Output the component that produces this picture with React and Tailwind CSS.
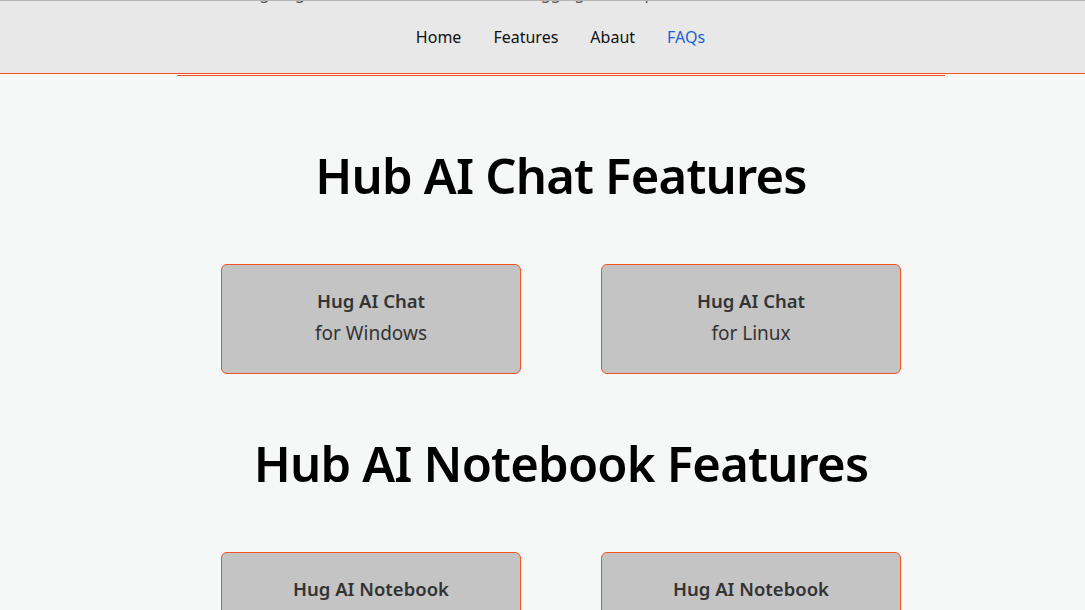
import React from "react";

const links = [
  { label: "Home" },
  { label: "Features" },
  { label: "Abaut" },
  { label: "FAQs", active: true },
];

const sections = [
  {
    title: "Hub AI Chat Features",
    cards: [
      { name: "Hug AI Chat", os: "for Windows" },
      { name: "Hug AI Chat", os: "for Linux" },
    ],
  },
  {
    title: "Hub AI Notebook Features",
    cards: [
      { name: "Hug AI Notebook", os: "for Windows" },
      { name: "Hug AI Notebook", os: "for Linux" },
    ],
  },
];

const FeatureCard = ({ name, os }) => (
  <div className="w-[300px] h-[110px] shrink-0 rounded-[6px] border border-[#f4511e] bg-[#c4c4c4] flex flex-col items-center justify-center pb-[4px] text-[#333333]">
    <span className="text-[18.5px] font-semibold leading-[33px]">{name}</span>
    <span className="text-[19px] leading-[33px]">{os}</span>
  </div>
);

export default function App() {
  return (
    <div
      className="h-[610px] overflow-hidden bg-[#f6f7f7] text-black"
      style={{ fontFamily: '"Noto Sans", "Open Sans", sans-serif' }}
    >
      {/* Header - page is scrolled a bit so the tagline is cut off */}
      <header className="h-[74px] overflow-hidden border-t border-b border-t-[#b4b4b4] border-b-[#f4511e] bg-[#e8e8e8]">
        <p className="-mt-[19px] pl-[226px] h-[22px] whitespace-nowrap text-[16px] leading-[22px] text-[#555]">
          Using Hug AI for chats, notes, code and logging and help
        </p>
        <nav className="pl-[36px] mt-[21px] flex justify-center gap-[32px] text-[16px] leading-[24px]">
          {links.map((l) => (
            <a
              key={l.label}
              href="#"
              className={l.active ? "text-[#1a62d6]" : "text-[#111111]"}
            >
              {l.label}
            </a>
          ))}
        </nav>
      </header>

      <div className="pl-[36px] flex justify-center mt-[1px]">
        <div className="w-[768px] h-[1px] bg-[#f4511e]" />
      </div>

      <main className="pl-[37px] pt-[69px]">
        {sections.map((s) => (
          <section key={s.title} className="flex flex-col items-center h-[288px]">
            <h2 className="text-[49px] font-semibold leading-[60px] tracking-[-0.8px]">
              {s.title}
            </h2>
            <div className="mt-[59px] flex gap-[80px]">
              {s.cards.map((c) => (
                <FeatureCard key={c.os} {...c} />
              ))}
            </div>
          </section>
        ))}
      </main>
    </div>
  );
}
